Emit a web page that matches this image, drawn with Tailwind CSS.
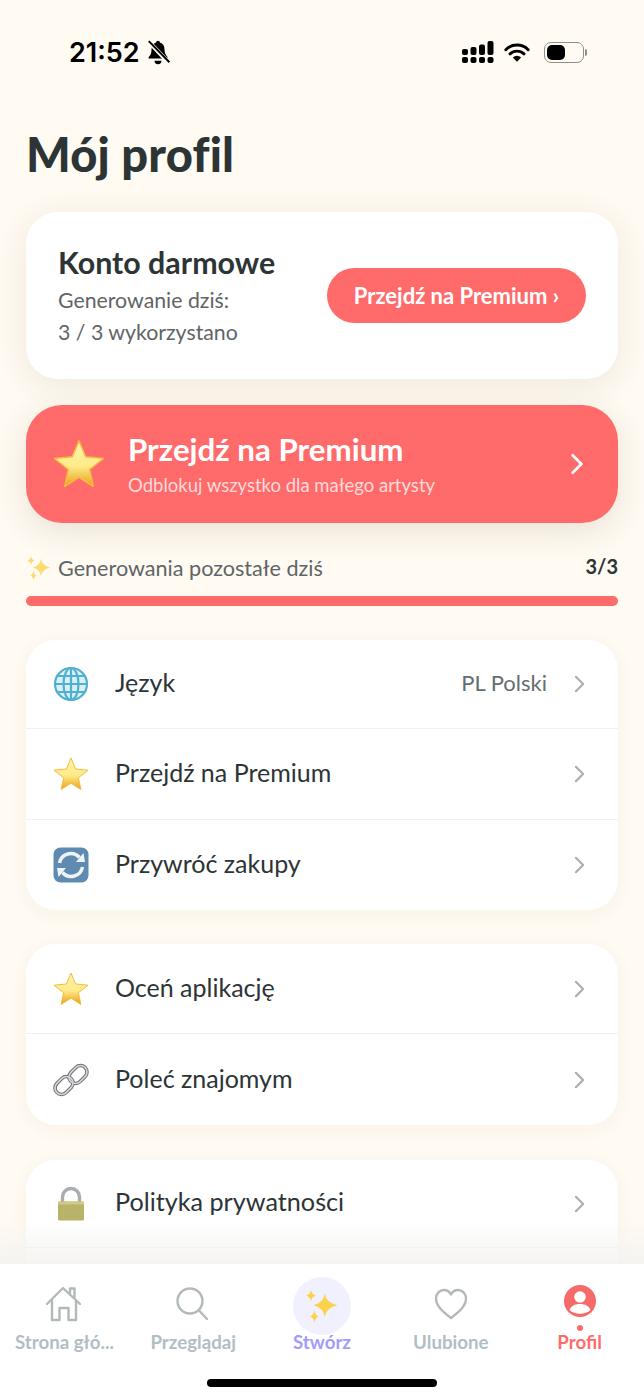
<!DOCTYPE html>
<html lang="pl">
<head>
  <meta charset="UTF-8" />
  <meta name="viewport" content="width=device-width, initial-scale=1.0" />
  <title>Mój profil</title>
  <script src="https://cdn.jsdelivr.net/npm/@tailwindcss/browser@4"></script>
</head>
<body class="bg-[#fffaf2] font-['Lato','Noto_Sans',sans-serif] text-[#2d3436]">
  <!-- shared icons, kept rendered at zero size so the gradient still resolves -->
  <svg class="absolute h-0 w-0">
    <defs>
      <linearGradient id="starFill" x1="0" y1="0" x2="0" y2="1">
        <stop offset="0" stop-color="#fff3b0" />
        <stop offset="0.55" stop-color="#ffeb8a" />
        <stop offset="1" stop-color="#e8a018" />
      </linearGradient>
      <symbol id="star" viewBox="0 0 36 36">
        <path d="M18 2 22.600 13 35 14.200 25.400 21.800 27.900 33.500 18 27.200 8.100 33.500 10.600 21.800 1 14.200 13.400 13Z" fill="url(#starFill)" stroke="#f3bd3c" stroke-width="1" stroke-linejoin="round" />
      </symbol>
      <symbol id="chev" viewBox="0 0 12 20">
        <path d="M2 2l8 8-8 8" fill="none" stroke="currentColor" stroke-width="2.400" stroke-linecap="round" stroke-linejoin="round" />
      </symbol>
    </defs>
  </svg>

  <div class="relative h-[1400px] w-[644px] overflow-hidden">
    <!-- Status bar -->
    <div class="flex h-[104px] items-center justify-between pl-[69px] pr-[57px]">
      <div class="flex items-center gap-[5px]">
        <span class="font-['Inter',sans-serif] text-[27px] font-semibold leading-none text-black">21:52</span>
        <svg class="h-[26px] w-[26px]" viewBox="0 0 24 24">
          <path d="M12 1.500c1 0 1.700.7 1.700 1.700 3 .8 4.300 3.300 4.300 6.300 0 3.500 1 5 2.700 7v1.500H3.300V17c1.700-2 2.700-3.500 2.700-7.500 0-3 1.300-5.500 4.300-6.300 0-1 .7-1.700 1.700-1.700Z" fill="#000" />
          <path d="M8.800 20h6.400a3.200 3.200 0 0 1-6.400 0Z" fill="#000" />
          <path d="M2.500 1.500 22 22" stroke="#fffaf2" stroke-width="4" />
          <path d="M3.500 2 22.500 21.500" stroke="#000" stroke-width="1.800" />
        </svg>
      </div>
      <div class="flex items-center">
        <svg class="h-[24px] w-[33px]" viewBox="0 0 33 24">
          <g fill="#000">
            <rect x="1" y="9" width="6" height="6" rx="2" /><rect x="9.500" y="7" width="6" height="8" rx="2" /><rect x="18" y="4.500" width="6" height="10.500" rx="2" /><rect x="26.500" y="1" width="6" height="14" rx="2" />
            <rect x="1" y="17" width="6" height="6" rx="2" /><rect x="9.500" y="17" width="6" height="6" rx="2" /><rect x="18" y="17" width="6" height="6" rx="2" /><rect x="26.500" y="17" width="6" height="6" rx="2" />
          </g>
        </svg>
        <svg class="ml-[10px] h-[22px] w-[26px]" viewBox="0 0 28 22">
          <path d="M2 8.500a17 17 0 0 1 24 0M6.500 13a11 11 0 0 1 15 0" fill="none" stroke="#000" stroke-width="3.200" stroke-linecap="round" />
          <path d="M14 21.500 9.600 16.800a6.500 6.500 0 0 1 8.800 0Z" fill="#000" />
        </svg>
        <div class="ml-[14px] flex items-center">
          <div class="h-[21px] w-[40px] rounded-[7px] border-[1.500px] border-[#8f8f88] p-[2px]">
            <div class="h-full w-[18px] rounded-[5px] bg-black"></div>
          </div>
          <div class="ml-[1px] h-[7px] w-[2px] rounded-r bg-[#8f8f88]"></div>
        </div>
      </div>
    </div>

    <main class="px-[26px]">
      <h1 class="h-[108px] pt-[22px] text-[47px] font-black leading-[56px] tracking-[0.2px] text-[#2d3436]">Mój profil</h1>

      <!-- Plan card -->
      <section class="flex h-[167px] items-center justify-between rounded-[32px] bg-white pl-[32px] pr-[32px] shadow-[0_6px_30px_rgba(120,100,60,0.12)]">
        <div>
          <h2 class="pt-[1px] text-[30.400px] font-bold leading-[34px] text-[#2d3436]">Konto darmowe</h2>
          <p class="mt-[5px] text-[21.300px] leading-[32px] text-[#5f6567]">Generowanie dziś:<br />3 / 3 wykorzystano</p>
        </div>
        <button class="h-[55px] w-[259px] rounded-full bg-[#ff6b6b] text-[22px] font-bold text-white">Przejdź na Premium ›</button>
      </section>

      <!-- Premium banner -->
      <section class="mt-[26px] flex h-[118px] items-center rounded-[36px] bg-[#ff6b6b] pl-[27px] pr-[34px] shadow-[0_8px_30px_rgba(120,100,60,0.16)]">
        <svg class="h-[52px] w-[52px]"><use href="#star" /></svg>
        <div class="ml-[23px] flex-1">
          <h2 class="text-[31.300px] font-bold leading-[33px] text-white">Przejdź na Premium</h2>
          <p class="mt-[8px] text-[18.500px] leading-[22px] text-white/75">Odblokuj wszystko dla małego artysty</p>
        </div>
        <svg class="h-[22px] w-[14px] text-white"><use href="#chev" /></svg>
      </section>

      <!-- Daily usage -->
      <div class="mt-[28px] flex items-center justify-between">
        <div class="flex items-center gap-[6px]">
          <svg class="h-[26px] w-[26px]" viewBox="0 0 26 26">
            <g fill="#fbdc72">
              <path d="M15 4q1 6.500 9 8.500-8 2-9 8.500-1-6.500-8-8.500 7-2 8-8.500Z" />
              <path d="M5 1q.5 3.500 3.500 4.500Q5.500 6.500 5 10q-.5-3.500-3.500-4.500Q4.500 4.500 5 1Z" />
              <path d="M7.500 16q.5 3.500 3 4.500-2.500 1-3 4.500-.5-3.500-3-4.500 2.500-1 3-4.500Z" />
            </g>
          </svg>
          <span class="pt-[1px] text-[21.600px] text-[#5f6567]">Generowania pozostałe dziś</span>
        </div>
        <span class="mt-[-4px] text-[20px] font-bold text-[#2d3436]">3/3</span>
      </div>
      <div class="mt-[12px] h-[10px] rounded-full bg-[#ff6b6b]"></div>

      <!-- Settings -->
      <section class="mt-[34px] divide-y divide-[#f3f1ec] rounded-[30px] bg-white shadow-[0_4px_18px_rgba(120,100,60,0.05)]">
        <a class="flex h-[89px] items-center pl-[27px] pr-[33px]">
          <svg class="h-[36px] w-[36px]" viewBox="0 0 36 36" fill="none" stroke="#4fb0cf" stroke-width="2.200">
            <circle cx="18" cy="18" r="16" fill="#d9f0f6" /><ellipse cx="18" cy="18" rx="7.500" ry="16" /><path d="M18 2v32M2 18h32M4.500 10h27M4.500 26h27" />
          </svg>
          <span class="ml-[26px] flex-1 pb-[3px] text-[25px] text-[#2d3436]">Język</span>
          <span class="mr-[27px] pb-[3px] text-[22px] text-[#636e72]">PL Polski</span>
          <svg class="h-[18px] w-[11px] text-[#a9aeaf]"><use href="#chev" /></svg>
        </a>
        <a class="flex h-[91px] items-center pl-[27px] pr-[33px]">
          <svg class="h-[36px] w-[36px]"><use href="#star" /></svg>
          <span class="ml-[26px] flex-1 pb-[3px] text-[25px] text-[#2d3436]">Przejdź na Premium</span>
          <svg class="h-[18px] w-[11px] text-[#a9aeaf]"><use href="#chev" /></svg>
        </a>
        <a class="flex h-[90px] items-center pl-[27px] pr-[33px]">
          <svg class="h-[36px] w-[36px]" viewBox="0 0 36 36">
            <rect x="0.500" y="0.500" width="35" height="35" rx="7" fill="#5f8bb0" />
            <path d="M6.500 16A11.500 11.500 0 0 1 26.500 10.500" fill="none" stroke="#eef3f7" stroke-width="3.500" />
            <path d="M29.500 20A11.500 11.500 0 0 1 9.500 25.500" fill="none" stroke="#eef3f7" stroke-width="3.500" />
            <path d="M23 15h9l-1.500-9Z M13 21H4l1.500 9Z" fill="#eef3f7" />
          </svg>
          <span class="ml-[26px] flex-1 pb-[3px] text-[25px] text-[#2d3436]">Przywróć zakupy</span>
          <svg class="h-[18px] w-[11px] text-[#a9aeaf]"><use href="#chev" /></svg>
        </a>
      </section>

      <section class="mt-[34px] divide-y divide-[#f3f1ec] rounded-[30px] bg-white shadow-[0_4px_18px_rgba(120,100,60,0.05)]">
        <a class="flex h-[90px] items-center pl-[27px] pr-[33px]">
          <svg class="h-[36px] w-[36px]"><use href="#star" /></svg>
          <span class="ml-[26px] flex-1 pb-[3px] text-[25px] text-[#2d3436]">Oceń aplikację</span>
          <svg class="h-[18px] w-[11px] text-[#a9aeaf]"><use href="#chev" /></svg>
        </a>
        <a class="flex h-[91px] items-center pl-[27px] pr-[33px]">
          <svg class="h-[36px] w-[36px]" viewBox="0 0 36 36" fill="none">
            <g stroke="#6d6f73" stroke-width="3.600">
              <rect x="1" y="17" width="20" height="13" rx="6.500" transform="rotate(-45 11 23.500)" />
              <rect x="15" y="6" width="20" height="13" rx="6.500" transform="rotate(-45 25 12.500)" />
            </g>
            <g stroke="#d5d6d8" stroke-width="1.600">
              <rect x="1" y="17" width="20" height="13" rx="6.500" transform="rotate(-45 11 23.500)" />
              <rect x="15" y="6" width="20" height="13" rx="6.500" transform="rotate(-45 25 12.500)" />
            </g>
          </svg>
          <span class="ml-[26px] flex-1 pb-[3px] text-[25px] text-[#2d3436]">Poleć znajomym</span>
          <svg class="h-[18px] w-[11px] text-[#a9aeaf]"><use href="#chev" /></svg>
        </a>
      </section>

      <section class="mt-[35px] divide-y divide-[#f3f1ec] rounded-[30px] bg-white shadow-[0_4px_18px_rgba(120,100,60,0.05)]">
        <a class="flex h-[88px] items-center pl-[27px] pr-[33px]">
          <svg class="h-[36px] w-[36px]" viewBox="0 0 36 36">
            <path d="M9.500 17V11a8.500 8.500 0 0 1 17 0v6" fill="none" stroke="#a9adb0" stroke-width="3.400" />
            <rect x="5" y="15.500" width="26" height="19" rx="1.500" fill="#b9b36a" />
            <rect x="5" y="15.500" width="26" height="3" fill="#cfca88" />
          </svg>
          <span class="ml-[26px] flex-1 pb-[3px] text-[25.200px] text-[#2d3436]">Polityka prywatności</span>
          <svg class="h-[18px] w-[11px] text-[#a9aeaf]"><use href="#chev" /></svg>
        </a>
        <a class="flex h-[90px] items-center pl-[27px] pr-[33px]"></a>
      </section>
    </main>

    <!-- Fade above the tab bar -->
    <div class="absolute bottom-[136px] left-0 h-[44px] w-full bg-gradient-to-b from-white/0 to-[#f4f3f1]/90"></div>

    <!-- Tab bar -->
    <nav class="absolute bottom-0 left-0 grid h-[136px] w-full grid-cols-5 bg-white pt-[14px] text-[18.700px] font-bold">
      <a class="flex flex-col items-center text-[#b2bec3]">
        <div class="flex h-[52px] items-center justify-center">
          <svg class="h-[38px] w-[38px]" viewBox="0 0 38 38" fill="none" stroke="#b3b9b9" stroke-width="2.400" stroke-linecap="round" stroke-linejoin="round">
            <path d="M2 19 18 3l17 16" /><path d="M7 16v19h7.500V23h9v12H31V16" /><path d="M25 8V3.500h4.500v9" />
          </svg>
        </div>
        <span class="mt-[1px] w-[110px] truncate text-center leading-[22px]">Strona głó...</span>
      </a>
      <a class="flex flex-col items-center text-[#b2bec3]">
        <div class="flex h-[52px] items-center justify-center">
          <svg class="h-[36px] w-[36px]" viewBox="0 0 36 36" fill="none" stroke="#b3b9b9" stroke-width="2.400" stroke-linecap="round">
            <circle cx="15" cy="15" r="12.500" /><path d="m24.500 25 7.500 8" />
          </svg>
        </div>
        <span class="mt-[1px] leading-[22px]">Przeglądaj</span>
      </a>
      <a class="flex flex-col items-center text-[#a29bfe]">
        <div class="mt-[-1px] flex h-[58px] w-[58px] items-center justify-center rounded-full bg-[#f1f0fe]">
          <svg class="h-[36px] w-[36px]" viewBox="0 0 26 26">
            <g fill="#fbd24e">
              <path d="M15 4q1 6.500 9 8.500-8 2-9 8.500-1-6.500-8-8.500 7-2 8-8.500Z" />
              <path d="M5 1q.5 3.500 3.500 4.500Q5.500 6.500 5 10q-.5-3.500-3.500-4.500Q4.500 4.500 5 1Z" />
              <path d="M7.500 16q.5 3.500 3 4.500-2.500 1-3 4.500-.5-3.500-3-4.500 2.500-1 3-4.500Z" />
            </g>
          </svg>
        </div>
        <span class="mt-[-4px] leading-[22px]">Stwórz</span>
      </a>
      <a class="flex flex-col items-center text-[#b2bec3]">
        <div class="flex h-[52px] items-center justify-center">
          <svg class="h-[32px] w-[34px]" viewBox="0 0 34 32" fill="none" stroke="#b3b9b9" stroke-width="2.400" stroke-linejoin="round">
            <path d="M17 30C9 24 2 18 2 10.500 2 5.500 5.800 2 10 2c3 0 5.500 1.500 7 4.500C18.500 3.500 21 2 24 2c4.200 0 8 3.500 8 8.500C32 18 25 24 17 30Z" />
          </svg>
        </div>
        <span class="mt-[1px] leading-[22px]">Ulubione</span>
      </a>
      <a class="relative flex flex-col items-center text-[#ff6b6b]">
        <div class="flex h-[52px] items-center justify-center">
          <svg class="mt-[-6px] h-[32px] w-[32px]" viewBox="0 0 32 32">
            <circle cx="16" cy="16" r="16" fill="#f76a6a" />
            <circle cx="16" cy="12" r="5.800" fill="#fff" />
            <path d="M5.500 25c1.500-4 5.500-6 10.500-6s9 2 10.500 6c-2.800 2.500-6.500 3.800-10.500 3.800S8.300 27.500 5.500 25Z" fill="#fff" />
          </svg>
        </div>
        <span class="absolute top-[47px] h-[6px] w-[6px] rounded-full bg-[#ff6b6b]"></span>
        <span class="mt-[1px] leading-[22px]">Profil</span>
      </a>
      <div class="absolute bottom-[13px] left-[207px] h-[8px] w-[230px] rounded-full bg-black"></div>
    </nav>
  </div>
</body>
</html>
